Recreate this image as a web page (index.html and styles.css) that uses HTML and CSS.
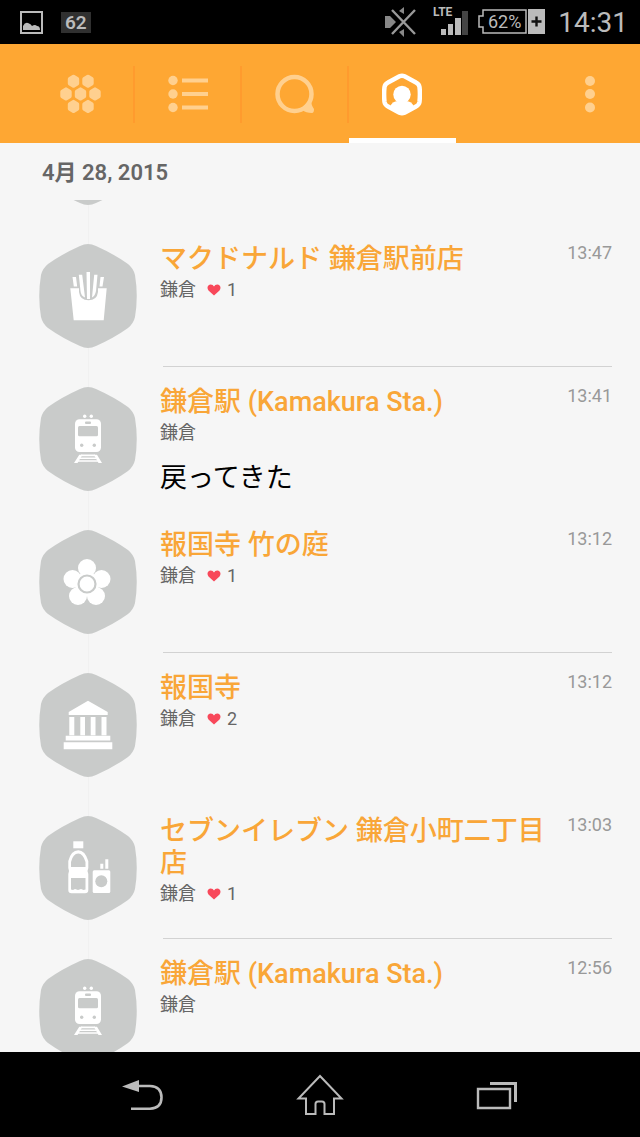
FILE: index.html
```html
<!DOCTYPE html>
<html lang="ja">
<head>
<meta charset="utf-8">
<meta name="viewport" content="width=device-width, initial-scale=1">
<title>4月 28, 2015</title>
<link rel="stylesheet" href="styles.css">
</head>
<body>
<svg class="symbols" aria-hidden="true">
  <symbol id="hex" viewBox="0 0 98 104">
    <path fill="#c9cbca" d="M41 2Q49-2 57 2Q75 10 89 20Q94.500 24.500 96 31Q99.500 52 96 73Q94.500 79.500 89 84Q75 94 57 102Q49 106 41 102Q23 94 9 84Q3.500 79.500 2 73Q-1.500 52 2 31Q3.500 24.500 9 20Q23 10 41 2Z"/>
  </symbol>
  <symbol id="train" viewBox="0 0 98 104">
    <g fill="#fff"><circle cx="45.7" cy="29.3" r="1.7"/><circle cx="52.3" cy="29.3" r="1.7"/><rect x="36" y="32.3" width="26" height="32.7" rx="4.5"/></g>
    <g fill="#c9cbca"><rect x="46" y="34.5" width="6" height="2.5" rx="1"/><rect x="39" y="39" width="20" height="10.3" rx="1.5"/><circle cx="42.7" cy="58.3" r="1.7"/><circle cx="55.3" cy="58.3" r="1.7"/></g>
    <path fill="none" stroke="#fff" stroke-width="1.6" d="M42 68.4H56M41 71.3H57M39 74H59"/>
    <path fill="#fff" d="M40.3 67.7H43.5L38.5 76H35ZM54.8 67.7H58L63 76H59.5Z"/>
  </symbol>
  <symbol id="heart" viewBox="0 0 14 12">
    <path fill="#f8485a" d="M7 11.5L1.5 6.5C-.6 4 .8.5 3.8.5Q6 .5 7 2.4Q8 .5 10.2.5C13.2.5 14.6 4 12.5 6.5Z"/>
  </symbol>
</svg>

<header class="status">
  <svg width="23" height="23" viewBox="0 0 23 23"><rect x="1" y="1" width="21" height="21" fill="none" stroke="#bbb" stroke-width="2"/><path fill="#bbb" d="M3 19V15Q5 11 8 12Q11 13 12 15Q15 13 17 15Q20 15 20 19Z"/></svg>
  <span class="status-badge">62</span>
  <svg class="status-mute" width="32" height="30" viewBox="0 0 32 30"><path fill="#888" d="M0 9H5L11 15L5 21H0ZM14 4L19 0V7ZM14 25L19 30V22Z"/><path stroke="#999" stroke-width="2.4" d="M7 3L30 27M30 3L7 27"/></svg>
  <svg class="status-signal" width="36" height="42" viewBox="0 0 36 42"><text x="0" y="15" font-size="12" font-weight="700" fill="#bbb">LTE</text><path fill="#bbb" d="M8 28H13V34H8ZM15 23H20V34H15ZM22 17H28V34H22Z"/><path fill="#444" d="M29 10H35V34H29Z"/></svg>
  <svg class="status-battery" width="68" height="26" viewBox="0 0 68 26"><path fill="none" stroke="#bbb" stroke-width="1.5" d="M5 1H48V24H5V18H1V7H5Z"/><text x="10" y="19" font-size="18" fill="#bbb">62%</text><rect x="50" y="0" width="17" height="25" fill="#bbb"/><path stroke="#111" stroke-width="2.4" d="M58.500 7.500V17.500M53.500 12.500H63.500"/></svg>
  <time class="status-clock">14:31</time>
</header>

<nav class="tabs">
  <button class="tab" aria-label="Swarm"><svg width="42" height="40" viewBox="0 0 42 40"><g fill="#ffd08f" stroke="#ffd08f" stroke-width="4" stroke-linejoin="round"><path id="c" d="M13.500 2.700L17.200 5V9.500L13.500 11.800L9.800 9.500V5Z"/><use href="#c" x="14.500"/><use href="#c" x="-7.500" y="12.700"/><use href="#c" x="7" y="12.700"/><use href="#c" x="21.500" y="12.700"/><use href="#c" y="25.200"/><use href="#c" x="14.500" y="25.200"/></g></svg></button>
  <button class="tab" aria-label="List"><svg width="40" height="38" viewBox="0 0 40 38"><g fill="#ffd08f"><circle cx="5" cy="5.500" r="4.700"/><circle cx="5" cy="19" r="4.700"/><circle cx="5" cy="32.500" r="4.700"/><path d="M14 3.500H40V7.500H14ZM14 17H40V21H14ZM14 30.500H40V34.500H14Z"/></g></svg></button>
  <button class="tab" aria-label="Messages"><svg width="40" height="40" viewBox="0 0 40 40"><circle cx="19.500" cy="20" r="17" fill="none" stroke="#ffd08f" stroke-width="4.500"/><path fill="#ffd08f" d="M27 34L36 25Q36 31 39 35Q39 39 37 39Q31 39 27 36Z"/></svg></button>
  <button class="tab tab--active" aria-label="Profile"><svg width="40" height="43" viewBox="0 0 40 43"><path fill="none" stroke="#fff" stroke-width="4.500" stroke-linejoin="round" d="M17.500 3.300Q20 2.200 22.500 3.300L34 9.500Q37 11 37.500 14Q38.300 21 37.500 29Q37 32 34 33.500L22.500 39.700Q20 40.800 17.500 39.700L6 33.500Q3 32 2.500 29Q1.700 21 2.500 14Q3 11 6 9.500Z"/><circle cx="20" cy="21.500" r="8.700" fill="#fff"/><path fill="#fff" d="M8 34Q10 28 16 28H24Q30 28 32 34L22 40H18Z"/></svg></button>
  <button class="more" aria-label="More"><svg width="12" height="38" viewBox="0 0 12 38"><g fill="#ffd08f"><circle cx="6" cy="6" r="5"/><circle cx="6" cy="19" r="5"/><circle cx="6" cy="32.500" r="5"/></g></svg></button>
</nav>

<h1 class="date">4月 28, 2015</h1>

<main class="timeline">
  <div class="entry entry--cut"><svg class="pin"><use href="#hex"/></svg></div>

  <article class="entry entry--ruled">
    <svg class="pin" viewBox="0 0 98 104"><use href="#hex"/><path fill="#fff" d="M31.300 44.300H40V48Q41 56.300 49.500 56.300Q58 56.300 59 48V44.300H67.700L64.700 76.300H34.700ZM33.500 33H37L38.200 42.500H34.800ZM39.800 30.700H43.200L46 53.500Q42 52 41.500 47ZM47.500 28H51V55H48ZM55.200 30.700H58.500L57 47Q56 52 53 53.500ZM61.500 33H65L63.500 42.500H60.500Z"/></svg>
    <div class="entry-main">
      <div class="entry-copy"><h2>マクドナルド 鎌倉駅前店</h2><p class="place">鎌倉 <svg class="heart"><use href="#heart"/></svg> 1</p></div>
      <time>13:47</time>
    </div>
  </article>

  <article class="entry">
    <svg class="pin" viewBox="0 0 98 104"><use href="#hex"/><use href="#train"/></svg>
    <div class="entry-main">
      <div class="entry-copy"><h2>鎌倉駅 (Kamakura Sta.)</h2><p class="place">鎌倉</p><p class="comment">戻ってきた</p></div>
      <time>13:41</time>
    </div>
  </article>

  <article class="entry entry--ruled">
    <svg class="pin" viewBox="0 0 98 104"><use href="#hex"/><g fill="#fff"><circle cx="48" cy="38" r="9"/><circle cx="33.500" cy="49" r="9"/><circle cx="62.500" cy="49" r="9"/><circle cx="39" cy="66" r="9"/><circle cx="57" cy="66" r="9"/><circle cx="48" cy="54" r="12"/></g><circle cx="48" cy="54" r="8.500" fill="none" stroke="#c9cbca" stroke-width="2.200"/></svg>
    <div class="entry-main">
      <div class="entry-copy"><h2>報国寺 竹の庭</h2><p class="place">鎌倉 <svg class="heart"><use href="#heart"/></svg> 1</p></div>
      <time>13:12</time>
    </div>
  </article>

  <article class="entry">
    <svg class="pin" viewBox="0 0 98 104"><use href="#hex"/><path fill="#fff" d="M49 27.700L68.700 39V42H29.700V39ZM30.300 44H35.300V62.300H30.300ZM41.300 44H46V62.300H41.300ZM51.700 44H56.500V62.300H51.700ZM62.500 44H67.500V62.300H62.500ZM26.700 62.700H71.300V67.500H26.700ZM24.700 69.300H73.300V76.300H24.700Z"/></svg>
    <div class="entry-main">
      <div class="entry-copy"><h2>報国寺</h2><p class="place">鎌倉 <svg class="heart"><use href="#heart"/></svg> 2</p></div>
      <time>13:12</time>
    </div>
  </article>

  <article class="entry entry--ruled">
    <svg class="pin" viewBox="0 0 98 104"><use href="#hex"/><g fill="#fff"><rect x="34.300" y="25.300" width="10" height="7"/><path d="M39.300 34.300Q46 34.300 49.300 45V52L48.500 55L49.300 58V74Q49.300 77.300 46 77.300H32.600Q29.300 77.300 29.300 74V58L30 55L29.300 52V45Q32 34.300 39.300 34.300Z"/><rect x="53.700" y="54.300" width="17.600" height="22.700" rx="1.500"/><path d="M61.300 47.700H64.300V52.700H61.300ZM66.300 43.300H69.300V52.700H66.300Z"/></g><g fill="#c9cbca"><path d="M39.300 37.500Q44 37.500 46.500 46V51H32V46Q34 37.500 39.300 37.500ZM32 62H46.500V73.500L44.500 74L42 73L39 74L36 73L34 74L32 73.500Z"/><circle cx="62.300" cy="65.300" r="6"/></g></svg>
    <div class="entry-main">
      <div class="entry-copy"><h2>セブンイレブン 鎌倉小町二丁目店</h2><p class="place">鎌倉 <svg class="heart"><use href="#heart"/></svg> 1</p></div>
      <time>13:03</time>
    </div>
  </article>

  <article class="entry">
    <svg class="pin" viewBox="0 0 98 104"><use href="#hex"/><use href="#train"/></svg>
    <div class="entry-main">
      <div class="entry-copy"><h2>鎌倉駅 (Kamakura Sta.)</h2><p class="place">鎌倉</p></div>
      <time>12:56</time>
    </div>
  </article>
</main>

<footer class="keys">
  <button aria-label="Back"><svg width="42" height="32" viewBox="0 0 42 32"><path fill="#bbb" d="M0 7.500L17 1V13Z"/><path fill="none" stroke="#bbb" stroke-width="2.600" d="M16 7H28Q39.500 7.500 39.500 18.500Q39.500 29 28 29.700H9"/></svg></button>
  <button aria-label="Home"><svg width="48" height="42" viewBox="0 0 48 42"><path fill="none" stroke="#bbb" stroke-width="2" d="M24 2L2.500 24.500H10V40H19.500V30Q19.500 27.500 22 27.500H26Q28.500 27.500 28.500 30V40H38V24.500H45.500Z"/></svg></button>
  <button aria-label="Recent apps"><svg width="42" height="30" viewBox="0 0 42 30"><path fill="none" stroke="#bbb" stroke-width="3" d="M14 3.500H39.500V22"/><path fill="none" stroke="#bbb" stroke-width="2.400" d="M2 9H34V28H2Z"/></svg></button>
</footer>
</body>
</html>
```

FILE: styles.css
```css
* { box-sizing: border-box; }

body {
  margin: 0;
  height: 100vh;
  display: flex;
  flex-direction: column;
  overflow: hidden;
  background: #f6f6f6;
  font-family: Roboto, "Noto Sans CJK JP", sans-serif;
}

h1, h2, p { margin: 0; }
svg { display: block; flex: none; }
.symbols { position: absolute; width: 0; height: 0; }

button {
  display: grid;
  place-items: center;
  padding: 0;
  border: 0;
  background: none;
}

.status {
  flex: none;
  height: 44px;
  display: flex;
  align-items: center;
  padding: 0 12px 0 20px;
  background: #000;
  color: #bbb;
}
.status-badge {
  margin-left: 18px;
  padding: 0 4px;
  background: #303030;
  font-size: 19px;
  line-height: 21px;
  font-weight: 600;
}
.status-mute { margin-left: auto; }
.status-signal { margin-left: 16px; }
.status-battery { margin-left: 9px; }
.status-clock { margin-left: 12px; font-size: 28px; line-height: 44px; padding-top: 2px; }

.tabs {
  flex: none;
  height: 99px;
  display: flex;
  padding: 0 20px 0 28px;
  background: #fea733;
}
.tab {
  width: 107px;
  border-bottom: 5px solid transparent;
  padding: 6px 2px 0 0;
  background: linear-gradient(#ff9b2e, #ff9b2e) right 22px / 2px 57px no-repeat border-box;
}
.tab--active { background: none; border-bottom-color: #fff; }
.more { width: 60px; margin-left: auto; }

.date {
  flex: none;
  height: 57px;
  padding-left: 42px;
  color: #666;
  font-size: 22px;
  line-height: 60px;
  font-weight: 600;
}

.timeline {
  flex: 1;
  min-height: 0;
  overflow: hidden;
  background: linear-gradient(#f1f1f1, #f1f1f1) 88px 0 / 1px 100% no-repeat;
}
.entry {
  min-height: 143px;
  display: flex;
  align-items: stretch;
  gap: 26px;
  padding: 0 28px 0 39px;
}
.entry--cut {
  min-height: 0;
  height: 24px;
  align-items: flex-end;
  padding-bottom: 19px;
  overflow: hidden;
}
.pin { width: 98px; height: 104px; margin-top: 20px; }
.entry--cut .pin { margin-top: 0; }
.entry-main {
  flex: 1;
  min-width: 0;
  display: flex;
  gap: 12px;
  padding-top: 18px;
  border-bottom: 1px solid transparent;
}
.entry--ruled .entry-main { border-bottom-color: #d2d2d2; }
.entry-copy { flex: 1; min-width: 0; margin-left: -3px; padding-top: 1px; }
.entry-copy h2 {
  color: #f9a638;
  font-size: 27px;
  line-height: 32px;
  font-weight: 500;
}
.place {
  display: flex;
  align-items: center;
  gap: 6px;
  color: #666;
  font-size: 18px;
  line-height: 30px;
}
.heart { width: 14px; height: 12px; margin-left: 5px; }
.comment {
  margin-top: 14px;
  color: #000;
  font-size: 27px;
  line-height: 32px;
}
.entry time { color: #999; font-size: 18px; line-height: 22px; }

.keys {
  flex: none;
  height: 85px;
  display: grid;
  grid-template-columns: repeat(3, 1fr);
  padding: 0 54px;
  background: #000;
}
```
